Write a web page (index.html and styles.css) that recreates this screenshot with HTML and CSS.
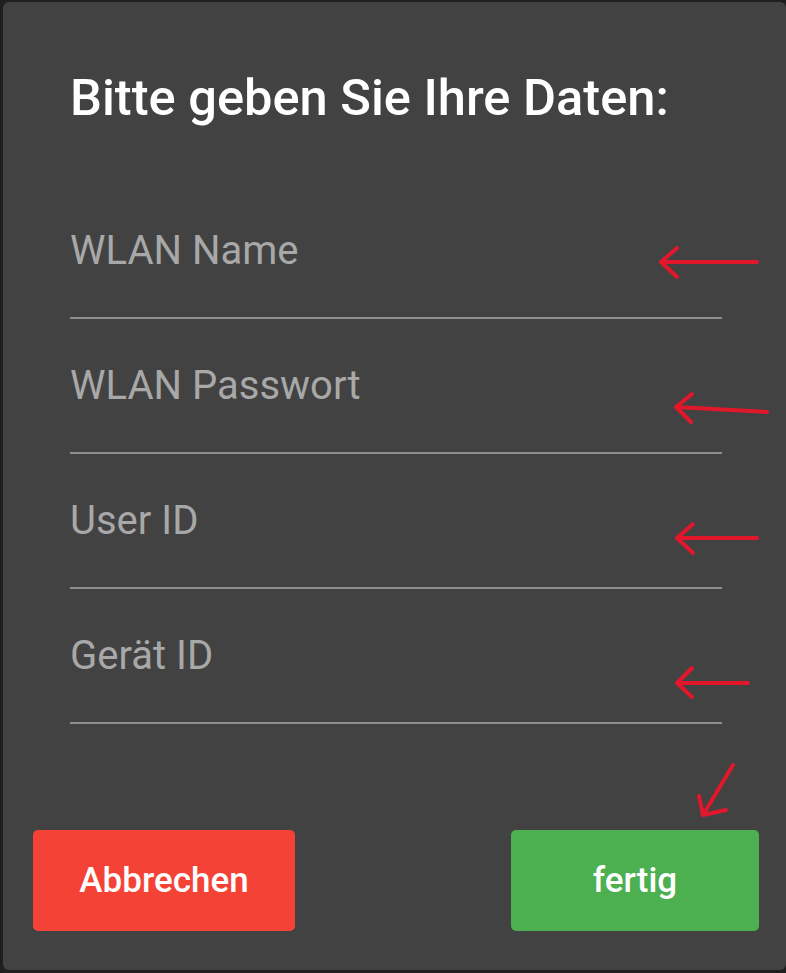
FILE: index.html
```html
<!DOCTYPE html>
<html lang="de">
<head>
<meta charset="utf-8">
<title>Daten</title>
<link rel="stylesheet" href="styles.css">
</head>
<body>
<div class="dialog">
  <h1 class="title">Bitte geben Sie Ihre Daten:</h1>
  <div class="fields">
    <div class="field"><input class="input" type="text" placeholder="WLAN Name"></div>
    <div class="field"><input class="input" type="password" placeholder="WLAN Passwort"></div>
    <div class="field"><input class="input" type="text" placeholder="User ID"></div>
    <div class="field"><input class="input" type="text" placeholder="Gerät ID"></div>
  </div>
  <div class="actions">
    <button class="btn btn-cancel">Abbrechen</button>
    <button class="btn btn-ok">fertig</button>
  </div>
</div>
<svg class="marks" width="786" height="973" viewBox="0 0 786 973" fill="none" stroke="#e3172b" stroke-width="4" stroke-linecap="round" stroke-linejoin="round">
  <path d="M757 262 L661 262 M677 248 L661 262 L677 277"/>
  <path d="M767 412 L676 407 M692 394 L676 407 L691 422"/>
  <path d="M757 538 L677 538 M693 524 L677 538 L693 553"/>
  <path d="M748 683 L677 683 M692 668 L677 683 L692 697"/>
  <path d="M733 765 L703 815 M699 796 L703 815 L726 810"/>
</svg>
</body>
</html>
```
FILE: styles.css
```css
html, body {
  margin: 0;
  padding: 0;
}
body {
  width: 786px;
  height: 973px;
  overflow: hidden;
  background: #1f1f1f;
  font-family: Roboto, "Noto Sans", Arial, sans-serif;
  position: relative;
}
.dialog {
  box-sizing: border-box;
  margin: 2px 0 0 3px;
  width: 783px;
  height: 968px;
  background: #424242;
  border-radius: 6px;
  display: flex;
  flex-direction: column;
}
.title {
  margin: 67px 0 0 0;
  padding-left: 67px;
  font-size: 50.6px;
  line-height: 58px;
  font-weight: 500;
  color: #ffffff;
}
.fields {
  padding: 0 64px 0 67px;
  margin-top: 57px;
}
.field {
  height: 133px;
  border-bottom: 2px solid #8e8e8e;
  box-sizing: content-box;
}
.input {
  display: block;
  box-sizing: border-box;
  width: 100%;
  margin: 0;
  padding: 42px 0 0 0;
  border: 0;
  outline: none;
  background: transparent;
  font-family: Roboto, "Noto Sans", Arial, sans-serif;
  font-size: 40px;
  line-height: 48px;
  height: 90px;
  color: #ffffff;
}
.input::placeholder {
  color: #a8a8a8;
  opacity: 1;
}
.actions {
  display: flex;
  justify-content: space-between;
  padding: 0 27px 0 30px;
  margin-top: 106px;
}
.btn {
  height: 101px;
  border: 0;
  border-radius: 5px;
  color: #ffffff;
  font-family: Roboto, "Noto Sans", Arial, sans-serif;
  font-size: 35px;
  font-weight: 500;
  padding: 0;
}
.btn-cancel {
  width: 262px;
  background: #f44336;
}
.btn-ok {
  width: 248px;
  background: #4caf50;
}
.marks {
  position: absolute;
  left: 0;
  top: 0;
  pointer-events: none;
}
```
